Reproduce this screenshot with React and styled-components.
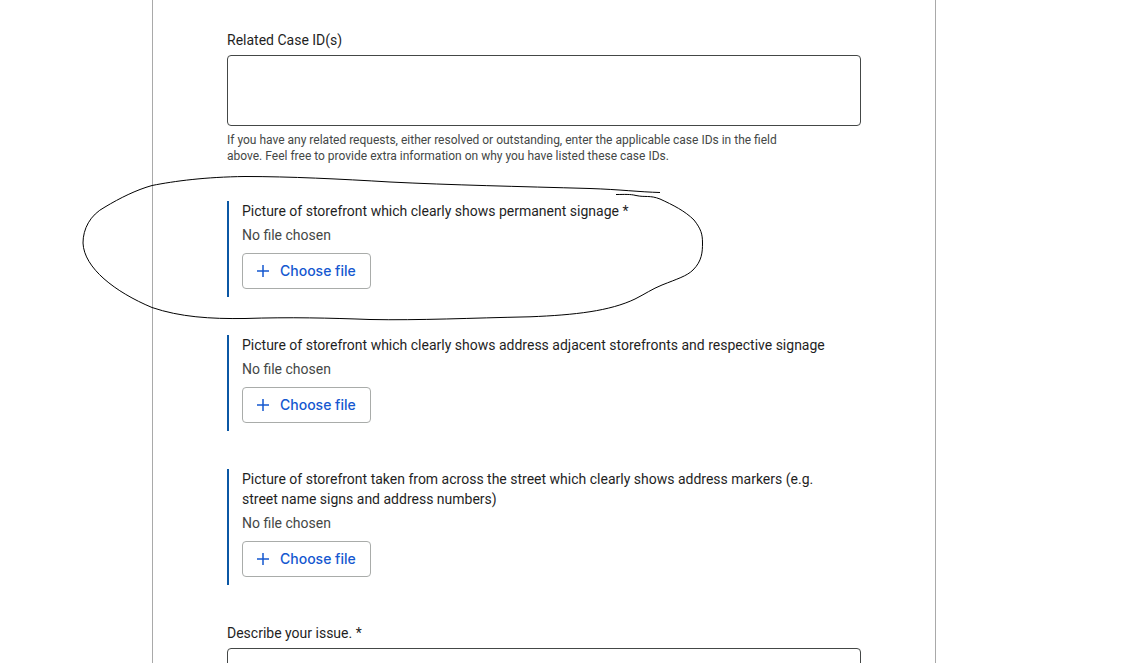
import React, { useRef, useState } from "react";
import styled, { createGlobalStyle } from "styled-components";

const GlobalStyle = createGlobalStyle`
  *, *::before, *::after {
    box-sizing: border-box;
  }

  body {
    margin: 0;
    background: #ffffff;
    color: #1f1f1f;
    font-family: Roboto, sans-serif;
    font-size: 14px;
    line-height: 20px;
  }
`;

const Page = styled.main`
  min-height: 100vh;
  padding-right: 56px;
`;

const Card = styled.form`
  display: flex;
  flex-direction: column;
  gap: 37px;
  max-width: 784px;
  min-height: 100vh;
  margin: 0 auto;
  padding: 30px 74px;
  border: solid #a9a9a9;
  border-width: 0 1px;
`;

const Field = styled.div`
  display: flex;
  flex-direction: column;
`;

const Label = styled.label`
  color: #1f1f1f;
`;

const TextArea = styled.textarea`
  display: block;
  width: 100%;
  height: 71px;
  margin-top: 5px;
  padding: 8px 12px;
  border: 1px solid #444746;
  border-radius: 4px;
  background: #ffffff;
  color: inherit;
  font: inherit;
  resize: none;
`;

const Hint = styled.p`
  margin: 6px 0 0;
  padding-right: 50px;
  color: #444746;
  font-size: 12px;
  line-height: 16px;
`;

const Upload = styled.div`
  position: relative;
  display: flex;
  flex-direction: column;
  align-items: flex-start;
  margin-bottom: 1px;
  padding: 0 12px 8px 13px;
  border-left: 2px solid #0b57a4;
`;

const FileName = styled.span`
  margin: 4px 0 8px;
  color: #444746;
`;

const HiddenInput = styled.input`
  display: none;
`;

const ChooseButton = styled.button`
  display: flex;
  align-items: center;
  gap: 10px;
  height: 36px;
  padding: 0 14px 0 13px;
  border: 1px solid #a9acaa;
  border-radius: 4px;
  background: #ffffff;
  color: #1558d0;
  font-family: Inter, sans-serif;
  font-size: 14px;
  font-weight: 500;
  line-height: 20px;
  cursor: pointer;
`;

const Scribble = styled.svg`
  position: absolute;
  top: -27px;
  left: -149px;
  pointer-events: none;
`;

const uploads = [
  {
    id: "storefront",
    label: "Picture of storefront which clearly shows permanent signage *",
    circled: true
  },
  {
    id: "adjacent",
    label:
      "Picture of storefront which clearly shows address adjacent storefronts and respective signage"
  },
  {
    id: "street",
    label:
      "Picture of storefront taken from across the street which clearly shows address markers (e.g. street name signs and address numbers)"
  }
];

const PlusIcon = () => (
  <svg width="14" height="14" viewBox="0 0 14 14" aria-hidden="true">
    <path d="M7 1v12M1 7h12" stroke="currentColor" strokeWidth="1.5" fill="none" />
  </svg>
);

const PenCircle = () => (
  <Scribble width="626" height="150" viewBox="80 174 626 150" aria-hidden="true">
    <path
      d="M660 192.500 C640 192 620 189.500 590 188.500 C520 186.500 450 185 390 182
        C340 179 290 176.500 245 176.500 C205 177 175 181 152 185.500
        C136 190 120 198 105 207 C90 215 83 229 83 243
        C84 268 115 292 152 307.500 C180 317 210 319 245 318.500
        C290 317 330 318 370 319.500 C420 320.500 470 318 530 316.800
        C575 315 610 311 635 299 C645 294 652 289 662 285
        C677 279 687 276 693 270 C702 261 702.500 252 702.500 243
        C702.500 234 701 229 694 220 C685 211 673 205 660 199
        C650 195 645 197.500 636 195.500 C630 194 625 194.500 616 194.500"
      fill="none"
      stroke="#000000"
      strokeWidth="1"
    />
  </Scribble>
);

const FileUpload = ({ id, label, circled }) => {
  const [fileName, setFileName] = useState("No file chosen");
  const input = useRef(null);

  return (
    <Upload>
      <Label htmlFor={id}>{label}</Label>
      <FileName>{fileName}</FileName>
      <HiddenInput
        id={id}
        type="file"
        ref={input}
        onChange={e =>
          setFileName(e.target.files[0] ? e.target.files[0].name : "No file chosen")
        }
      />
      <ChooseButton type="button" onClick={() => input.current.click()}>
        <PlusIcon />
        Choose file
      </ChooseButton>
      {circled && <PenCircle />}
    </Upload>
  );
};

const App = () => (
  <>
    <GlobalStyle />
    <Page>
      <Card>
        <Field>
          <Label htmlFor="case-ids">Related Case ID(s)</Label>
          <TextArea id="case-ids" />
          <Hint>
            If you have any related requests, either resolved or outstanding, enter
            the applicable case IDs in the field above. Feel free to provide extra
            information on why you have listed these case IDs.
          </Hint>
        </Field>
        {uploads.map(upload => (
          <FileUpload key={upload.id} {...upload} />
        ))}
        <Field>
          <Label htmlFor="issue">Describe your issue. *</Label>
          <TextArea id="issue" />
        </Field>
      </Card>
    </Page>
  </>
);

export default App;
